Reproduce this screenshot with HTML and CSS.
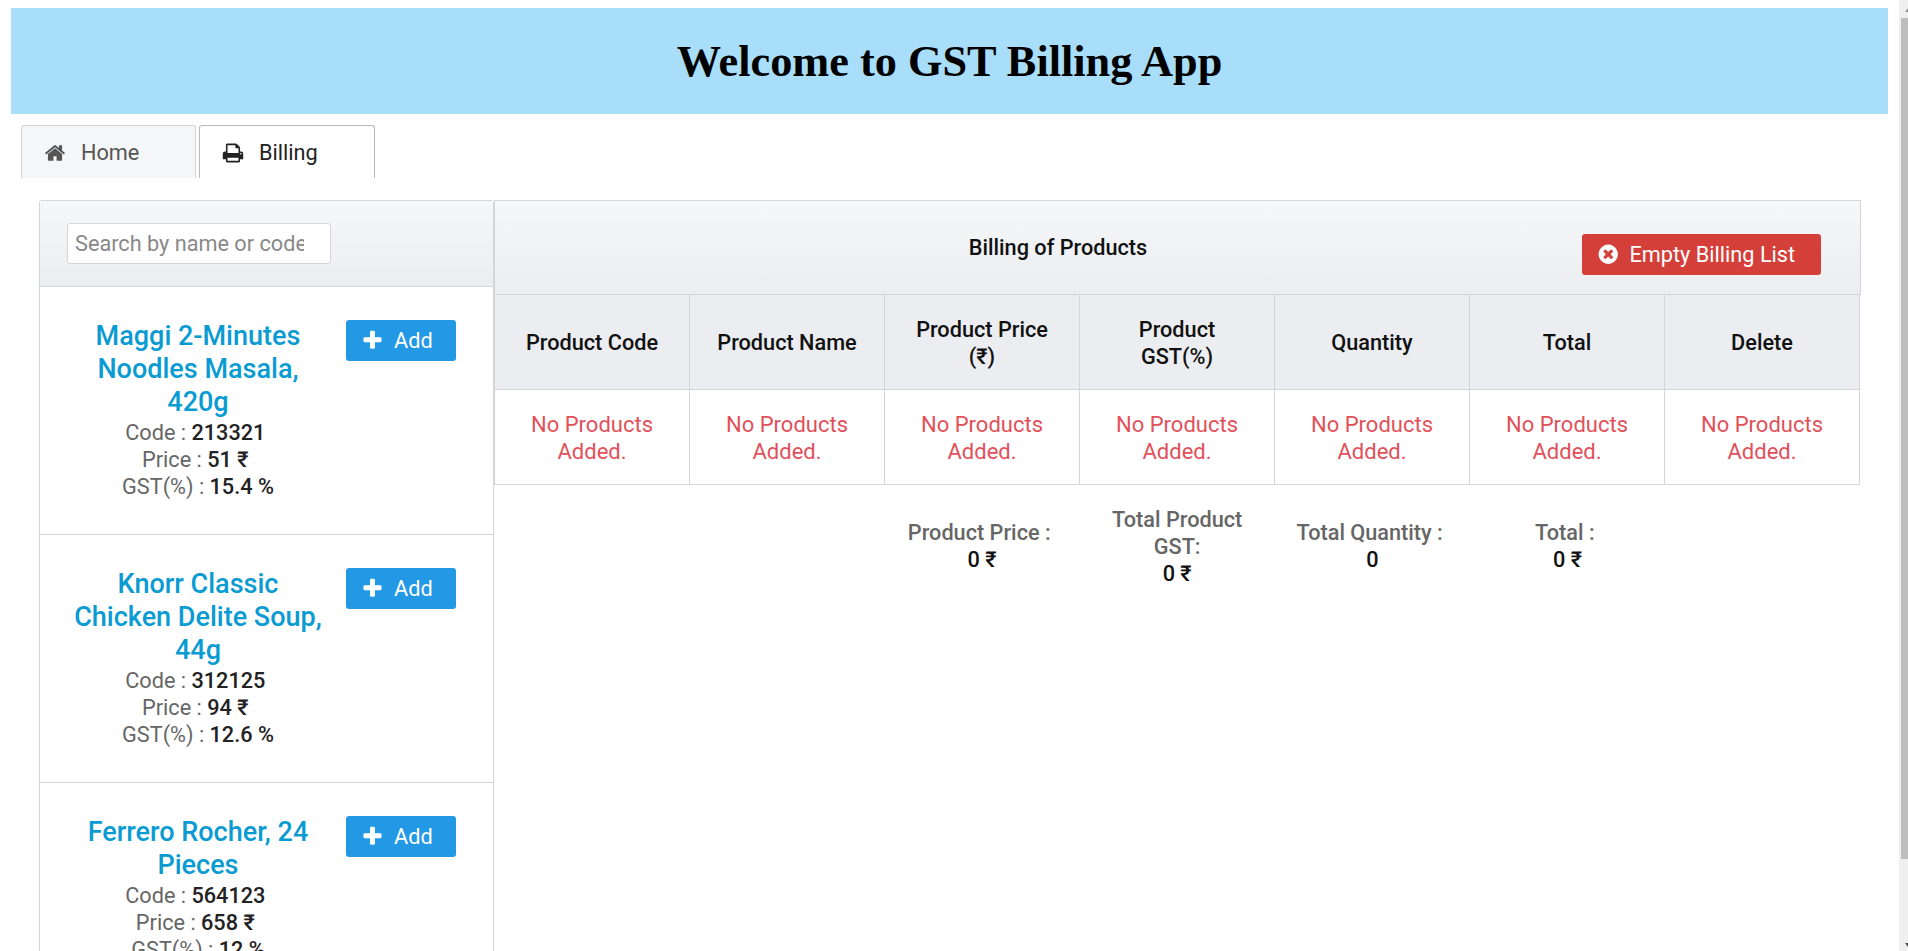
FILE: index.html
```html
<!DOCTYPE html>
<html lang="en">

<head>
    <meta charset="UTF-8">
    <meta name="viewport" content="width=device-width, initial-scale=1.0">
    <title>GST Billing App</title>
    <link rel="stylesheet" href="styles.css">
</head>

<body>
    <h1 class="banner">Welcome to GST Billing App</h1>

    <nav class="tabs">
        <a class="tab">
            <svg class="icon" viewBox="0 0 1792 1792"><path d="M1472 992v480q0 26-19 45t-45 19h-384v-384h-256v384h-384q-26 0-45-19t-19-45v-480q0-1 .5-3t.5-3l575-474 575 474q1 2 1 6zm223-69l-62 74q-8 9-21 11h-3q-13 0-21-7l-692-577-692 577q-12 8-24 7-13-2-21-11l-62-74q-8-10-7-23.500t11-21.500l719-599q32-26 76-26t76 26l244 204v-195q0-14 9-23t23-9h192q14 0 23 9t9 23v408l219 182q10 8 11 21.500t-7 23.500z"/></svg>
            Home
        </a>
        <a class="tab tab-active">
            <svg class="icon" viewBox="0 0 1792 1792"><path d="M448 1536h896v-256h-896v256zm0-640h896v-384h-160q-40 0-68-28t-28-68v-160h-640v640zm1152 64q0-26-19-45t-45-19-45 19-19 45 19 45 45 19 45-19 19-45zm128 0v416q0 13-9.500 22.500t-22.500 9.500h-224v160q0 40-28 68t-68 28h-960q-40 0-68-28t-28-68v-160h-224q-13 0-22.500-9.500t-9.500-22.500v-416q0-79 56.500-135.500t135.500-56.500h64v-544q0-40 28-68t68-28h672q40 0 88 20t76 48l152 152q28 28 48 76t20 88v256h64q79 0 135.500 56.500t56.500 135.500z"/></svg>
            Billing
        </a>
    </nav>

    <div class="billing">
        <aside class="products">
            <div class="search-bar">
                <input class="search" type="text" placeholder="Search by name or code">
            </div>

            <div class="product">
                <div class="product-info">
                    <div class="product-name">Maggi 2-Minutes Noodles Masala, 420g</div>
                    <div class="label">Code : <span class="value">213321&nbsp;</span></div>
                    <div class="label">Price : <span class="value">51 ₹&nbsp;</span></div>
                    <div class="label">GST(%) : <span class="value">15.4 %</span></div>
                </div>
                <button class="btn btn-add">
                    <svg class="icon" viewBox="0 0 1792 1792"><path d="M1600 736v192q0 40-28 68t-68 28h-416v416q0 40-28 68t-68 28h-192q-40 0-68-28t-28-68v-416h-416q-40 0-68-28t-28-68v-192q0-40 28-68t68-28h416v-416q0-40 28-68t68-28h192q40 0 68 28t28 68v416h416q40 0 68 28t28 68z"/></svg>
                    Add
                </button>
            </div>

            <div class="product">
                <div class="product-info">
                    <div class="product-name">Knorr Classic Chicken Delite Soup, 44g</div>
                    <div class="label">Code : <span class="value">312125&nbsp;</span></div>
                    <div class="label">Price : <span class="value">94 ₹&nbsp;</span></div>
                    <div class="label">GST(%) : <span class="value">12.6 %</span></div>
                </div>
                <button class="btn btn-add">
                    <svg class="icon" viewBox="0 0 1792 1792"><path d="M1600 736v192q0 40-28 68t-68 28h-416v416q0 40-28 68t-68 28h-192q-40 0-68-28t-28-68v-416h-416q-40 0-68-28t-28-68v-192q0-40 28-68t68-28h416v-416q0-40 28-68t68-28h192q40 0 68 28t28 68v416h416q40 0 68 28t28 68z"/></svg>
                    Add
                </button>
            </div>

            <div class="product">
                <div class="product-info">
                    <div class="product-name">Ferrero Rocher, 24 Pieces</div>
                    <div class="label">Code : <span class="value">564123&nbsp;</span></div>
                    <div class="label">Price : <span class="value">658 ₹&nbsp;</span></div>
                    <div class="label">GST(%) : <span class="value">12 %</span></div>
                </div>
                <button class="btn btn-add">
                    <svg class="icon" viewBox="0 0 1792 1792"><path d="M1600 736v192q0 40-28 68t-68 28h-416v416q0 40-28 68t-68 28h-192q-40 0-68-28t-28-68v-416h-416q-40 0-68-28t-28-68v-192q0-40 28-68t68-28h416v-416q0-40 28-68t68-28h192q40 0 68 28t28 68v416h416q40 0 68 28t28 68z"/></svg>
                    Add
                </button>
            </div>
        </aside>

        <section class="bill">
            <div class="bill-header">
                <div class="bill-title">Billing of Products</div>
                <button class="btn btn-empty">
                    <svg class="icon" viewBox="0 0 1792 1792"><path d="M1277 1122q0-26-19-45l-181-181 181-181q19-19 19-45 0-27-19-46l-90-90q-19-19-46-19-26 0-45 19l-181 181-181-181q-19-19-45-19-27 0-46 19l-90 90q-19 19-19 46 0 26 19 45l181 181-181 181q-19 19-19 45 0 27 19 46l90 90q19 19 46 19 26 0 45-19l181-181 181 181q19 19 45 19 27 0 46-19l90-90q19-19 19-46zm387-226q0 209-103 385.500t-279.500 279.500-385.500 103-385.500-103-279.500-279.500-103-385.500 103-385.500 279.500-279.500 385.500-103 385.500 103 279.500 279.500 103 385.500z"/></svg>
                    Empty Billing List
                </button>
            </div>

            <table class="bill-table">
                <thead>
                    <tr>
                        <th>Product Code</th>
                        <th>Product Name</th>
                        <th>Product Price (₹)</th>
                        <th>Product GST(%)</th>
                        <th>Quantity</th>
                        <th>Total</th>
                        <th>Delete</th>
                    </tr>
                </thead>
                <tbody>
                    <tr>
                        <td>No Products Added.</td>
                        <td>No Products Added.</td>
                        <td>No Products Added.</td>
                        <td>No Products Added.</td>
                        <td>No Products Added.</td>
                        <td>No Products Added.</td>
                        <td>No Products Added.</td>
                    </tr>
                </tbody>
            </table>

            <div class="summary">
                <div></div>
                <div></div>
                <div class="sum-cell"><div class="sum-label">Product Price :&nbsp;</div><div class="sum-value">0 ₹</div></div>
                <div class="sum-cell"><div class="sum-label">Total Product GST:</div><div class="sum-value">0 ₹</div></div>
                <div class="sum-cell"><div class="sum-label">Total Quantity :&nbsp;</div><div class="sum-value">0</div></div>
                <div class="sum-cell"><div class="sum-label">Total :&nbsp;</div><div class="sum-value">0 ₹</div></div>
                <div></div>
            </div>
        </section>
    </div>

    <div class="scrollbar"><span class="scroll-arrow"></span><span class="scroll-thumb"></span><span class="scroll-arrow scroll-arrow-down"></span></div>
</body>

</html>
```
FILE: styles.css
```css
html,
body {
    height: 951px;
    overflow: hidden;
}

body {
    margin: 0;
    padding: 8px 20px 0 11px;
    box-sizing: border-box;
    background: #fff;
    font-family: Roboto, "Liberation Sans", sans-serif;
    font-size: 21.7px;
    line-height: 27px;
    color: #222;
}

.banner {
    margin: 0;
    height: 106px;
    background-color: #a8defa;
    font-family: "Liberation Serif", serif;
    font-size: 44.3px;
    line-height: 108px;
    font-weight: bold;
    text-align: center;
    color: #000;
}

.icon {
    width: 1em;
    height: 1em;
    fill: currentColor;
    flex-shrink: 0;
}

/* tabs */
.tabs {
    display: flex;
    gap: 3px;
    margin: 11px 0 0 10px;
}

.tab {
    display: flex;
    align-items: center;
    gap: 15px;
    width: 175px;
    height: 53px;
    box-sizing: border-box;
    padding: 1px 0 0 22px;
    border: 1px solid #d5d5d5;
    border-bottom: 0;
    border-radius: 3px 3px 0 0;
    background: #f5f6f8;
    color: #555;
}

.tab .icon {
    width: 22px;
    height: 22px;
}

.tab-active {
    width: 176px;
    background: #fff;
    border-color: #b8b8b8;
    color: #222;
}

/* main layout */
.billing {
    display: flex;
    margin: 22px 0 0 28px;
}

.products {
    width: 455px;
    box-sizing: border-box;
    border: 1px solid #d5d5d5;
    border-radius: 3px 3px 0 0;
    flex-shrink: 0;
}

.search-bar {
    height: 86px;
    box-sizing: border-box;
    padding: 22px 0 0 27px;
    border-bottom: 1px solid #d5d5d5;
    background: linear-gradient(#f6f7f9, #ebedf0);
}

.search {
    display: block;
    width: 264px;
    height: 41px;
    box-sizing: border-box;
    padding: 0 26px 0 7px;
    border: 1px solid #d5d5d5;
    border-radius: 3px;
    font-family: inherit;
    font-size: 21.7px;
}

.search::placeholder {
    color: #888;
}

.product {
    display: flex;
    align-items: flex-start;
    padding: 33px 37px 34px 29px;
    border-bottom: 1px solid #d5d5d5;
}

.product-info {
    width: 258px;
    margin-right: 19px;
    flex-shrink: 0;
    text-align: center;
}

.product-name {
    font-size: 27px;
    line-height: 33px;
    font-weight: 500;
    color: #0a9bd3;
}

.label {
    color: #666;
}

.value {
    font-weight: 500;
    color: #222;
}

.btn {
    display: flex;
    align-items: center;
    height: 41px;
    box-sizing: border-box;
    border: 0;
    border-radius: 3px;
    color: #fff;
    font-family: inherit;
    font-size: 21.7px;
}

.btn-add {
    width: 110px;
    padding: 0 0 0 15px;
    gap: 10px;
    background: #2399e5;
    flex-shrink: 0;
}

.btn-add .icon {
    width: 23px;
    height: 23px;
}

.btn-empty {
    width: 239px;
    padding: 0 0 0 15px;
    gap: 10px;
    background: #d43f3a;
}

.btn-empty .icon {
    width: 22.5px;
    height: 22.5px;
}

/* right side */
.bill {
    width: 1367px;
}

.bill-header {
    display: flex;
    height: 95px;
    box-sizing: border-box;
    border: 1px solid #d5d5d5;
    background: linear-gradient(#f6f7f9, #ebedf0);
    align-items: flex-start;
}

.bill-title {
    width: 1126px;
    margin-top: 33px;
    text-align: center;
    font-weight: 500;
    color: #111;
}

.bill-header .btn-empty {
    margin: 33px 0 0 -39px;
}

.bill-table {
    width: 1366px;
    border-collapse: collapse;
    table-layout: fixed;
    text-align: center;
}

.bill-table th,
.bill-table td {
    height: 95px;
    box-sizing: border-box;
    padding: 2px 24px 0;
    border: 1px solid #d5d5d5;
}

.bill-table th {
    height: 94px;
    background: #ebedf0;
    font-weight: 500;
    color: #111;
    border-top: 0;
}

.bill-table td {
    font-size: 22px;
    color: #e2505a;
}

.summary {
    display: grid;
    grid-template-columns: repeat(7, 195.2px);
    align-items: center;
    margin-top: 21px;
    text-align: center;
}

.sum-cell {
    padding: 0 14px;
}

.sum-label {
    font-weight: 500;
    color: #666;
}

.sum-value {
    font-weight: 500;
    color: #111;
}

/* page scrollbar */
.scrollbar {
    position: fixed;
    top: 0;
    right: 0;
    width: 9px;
    height: 100%;
    background: #efefef;
    overflow: hidden;
}

.scroll-thumb {
    position: absolute;
    top: 18px;
    right: 0;
    width: 7px;
    height: 841px;
    background: #bdbdbd;
}

.scroll-arrow {
    position: absolute;
    top: 8px;
    right: -3px;
    border-left: 3px solid transparent;
    border-right: 3px solid transparent;
    border-bottom: 4px solid #909090;
}

.scroll-arrow-down {
    top: 943px;
    border-bottom: 0;
    border-top: 4px solid #505050;
}
```
